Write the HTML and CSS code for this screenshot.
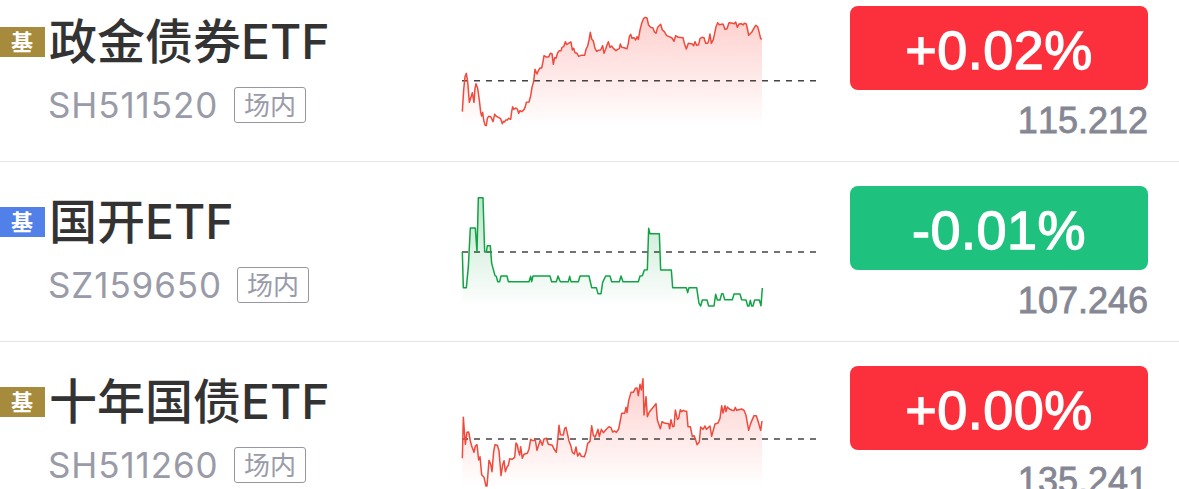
FILE: index.html
```html
<!DOCTYPE html>
<html lang="zh-CN">
<head>
  <meta charset="UTF-8" />
  <meta name="viewport" content="width=device-width, initial-scale=1" />
  <title>自选基金</title>
  <link rel="stylesheet" href="styles.css">
</head>
<body>

  <!-- Shared gradients -->
  <svg class="defs" width="0" height="0">
    <defs>
      <linearGradient id="fillRed" x1="0" y1="0" x2="0" y2="1">
        <stop offset="0" stop-color="#f9423a" stop-opacity="0.25" />
        <stop offset="1" stop-color="#f9423a" stop-opacity="0" />
      </linearGradient>
      <linearGradient id="fillGreen" x1="0" y1="0" x2="0" y2="1">
        <stop offset="0" stop-color="#16a34a" stop-opacity="0.28" />
        <stop offset="1" stop-color="#16a34a" stop-opacity="0" />
      </linearGradient>
    </defs>
  </svg>

  <div class="list">
    <div class="row">
      <span class="badge gold">基</span>
      <div class="info">
        <div class="name">政金债券ETF</div>
        <div class="meta">
          <span class="code">SH511520</span>
          <span class="tag">场内</span>
        </div>
      </div>
      <svg class="chart red" viewBox="0 0 1095 375">
        <path class="area" />
        <path class="base" d="M21,212 H1084" />
        <polyline class="line" points="22,305 26,240 30,200 34,190 38,215 43,277 48,262 52,248 57,277 60,235 63,221 68,235 73,270 77,307 80,318 83,307 86,330 90,345 94,347 97,325 101,319 107,320 111,328 114,335 119,313 123,318 130,322 137,326 142,341 146,334 149,336 152,330 157,330 161,325 167,328 170,305 173,290 176,298 183,294 187,297 191,310 195,302 200,305 207,299 211,290 214,277 222,276 227,258 231,232 236,214 240,178 246,192 250,182 255,174 260,174 264,155 267,137 274,141 281,141 286,130 291,131 295,163 299,143 303,145 308,128 313,122 318,122 321,112 326,110 331,95 335,104 342,99 348,96 352,120 356,115 360,128 366,130 371,139 378,136 389,136 393,118 398,108 402,90 406,67 410,87 415,93 420,115 425,124 430,121 437,120 443,107 447,130 452,118 456,105 460,95 465,112 470,108 475,115 483,122 488,118 493,116 496,102 500,112 507,113 516,116 520,100 523,80 527,73 531,85 537,83 542,90 546,80 550,88 555,60 560,40 566,25 571,22 576,24 581,46 587,52 594,54 598,65 603,70 608,52 617,43 622,60 628,65 635,77 643,80 651,84 657,94 662,77 670,82 684,83 688,100 694,117 700,100 712,102 716,107 720,95 725,106 731,104 735,86 741,82 747,83 752,100 758,100 761,92 765,72 769,100 775,88 779,70 783,50 788,38 793,44 804,42 810,58 816,56 822,38 830,39 838,41 842,36 847,52 852,42 859,41 864,45 868,40 874,42 878,60 881,76 890,67 896,56 902,46 908,50 912,65 917,86 921,87" />
      </svg>
      <div class="quote">
        <div class="change up">+0.02%</div>
        <div class="price">115.212</div>
      </div>
    </div>

    <div class="row">
      <span class="badge blue">基</span>
      <div class="info">
        <div class="name">国开ETF</div>
        <div class="meta">
          <span class="code wide">SZ159650</span>
          <span class="tag">场内</span>
        </div>
      </div>
      <svg class="chart green" viewBox="0 0 1095 375">
        <path class="area" />
        <path class="base" d="M21,186 H1084" />
        <polyline class="line" points="22,186 25,293 34,293 40,230 46,114 61,114 66,186 70,23 84,23 89,186 94,186 97,167 106,167 110,220 120,257 124,259 128,275 134,275 138,258 156,258 160,275 222,275 227,259 230,275 234,258 285,258 290,275 304,275 309,258 316,275 340,275 344,259 348,275 370,275 375,258 402,258 410,293 424,293 429,311 438,311 443,277 452,258 465,258 470,275 493,275 498,258 504,275 550,275 555,258 562,257 568,240 577,239 581,115 585,131 613,131 617,240 649,240 653,293 694,293 698,308 702,293 725,293 732,340 737,348 742,330 756,330 761,348 777,348 782,313 787,330 795,330 800,311 804,311 809,329 832,329 837,312 855,312 860,329 873,330 878,348 882,348 886,331 890,348 894,348 899,330 913,330 918,347 922,294" />
      </svg>
      <div class="quote">
        <div class="change down">-0.01%</div>
        <div class="price">107.246</div>
      </div>
    </div>

    <div class="row">
      <span class="badge gold">基</span>
      <div class="info">
        <div class="name">十年国债ETF</div>
        <div class="meta">
          <span class="code">SH511260</span>
          <span class="tag">场内</span>
        </div>
      </div>
      <svg class="chart red" viewBox="0 0 1095 375">
        <path class="area" />
        <path class="base" d="M21,207 H1084" />
        <polyline class="line" points="22,265 25,142 31,223 36,187 41,186 46,213 51,231 57,247 61,228 66,224 71,270 75,260 80,314 87,322 93,348 96,348 102,271 107,282 111,305 116,245 120,224 127,226 132,242 138,317 143,284 147,272 151,305 156,291 160,286 164,266 171,268 179,262 183,219 187,225 190,242 194,255 197,230 202,265 207,253 217,250 222,237 227,208 233,212 241,210 246,241 252,222 256,210 262,226 267,207 274,205 280,223 292,226 297,237 304,247 308,210 312,166 316,194 325,195 329,175 333,172 337,190 342,213 348,229 352,247 358,252 363,231 368,258 374,249 379,259 388,260 393,245 398,220 405,214 410,167 415,196 420,202 425,190 429,178 433,200 439,178 445,188 454,178 462,170 468,173 473,186 479,183 484,187 491,177 500,130 509,130 513,112 516,128 521,92 528,67 535,67 541,55 546,54 550,77 555,43 559,60 564,26 567,135 573,80 577,140 583,126 603,101 607,150 616,176 621,155 628,159 641,161 644,176 648,149 653,170 657,169 661,120 667,148 671,145 676,119 680,125 685,121 691,124 695,124 699,170 706,170 712,200 717,197 721,206 726,224 733,215 737,171 744,178 750,168 754,178 765,168 770,199 780,162 789,159 795,145 800,107 804,129 810,107 813,125 817,111 823,117 830,120 837,122 841,112 845,121 860,117 867,121 873,136 881,181 887,160 897,137 904,137 909,153 917,181 921,153" />
      </svg>
      <div class="quote">
        <div class="change up">+0.00%</div>
        <div class="price">135.241</div>
      </div>
    </div>
  </div>

  <script>
    // Fill the area under each line
    const bottom = 350;

    document.querySelectorAll(".chart").forEach((chart) => {
      const points = chart.querySelector(".line").getAttribute("points").split(" ");
      const left = points[0].split(",")[0];
      const right = points[points.length - 1].split(",")[0];

      chart.querySelector(".area").setAttribute(
        "d",
        "M" + left + "," + bottom + " L" + points.join(" ") + " L" + right + "," + bottom + " Z"
      );
    });
  </script>

</body>
</html>
```
FILE: styles.css
```css
* {
  margin: 0;
  padding: 0;
  box-sizing: border-box;
}

html, body {
  height: 100%;
  overflow: hidden;
}

body {
  background: #fff;
  font-family: Inter, "Noto Sans CJK SC", sans-serif;
}

.defs {
  display: block;
}

/* The list is scrolled a little, the first row is cut at the top */
.list {
  margin-top: -18px;
}

.row {
  display: flex;
  align-items: flex-start;
  height: 180px;
  border-bottom: 1px solid #e4e4e6;
}

.badge {
  width: 45px;
  height: 30px;
  margin-top: 45px;
  padding-right: 1px;
  color: #fff;
  font-size: 22px;
  font-weight: 700;
  line-height: 30px;
  text-align: center;
}

.gold {
  background: #a68b3c;
}

.blue {
  background: #5080e8;
}

.info {
  width: 407px;
  margin-left: 3px;
  padding-top: 30px;
}

.name {
  height: 60px;
  padding-left: 1px;
  color: #333;
  font-size: 48px;
  font-weight: 500;
  line-height: 60px;
  white-space: nowrap;
}

.meta {
  display: flex;
  align-items: center;
  gap: 15px;
  margin-top: 15px;
}

.code {
  width: 171px;
  color: #9a9ba8;
  font-size: 35px;
  line-height: 36px;
  letter-spacing: 0.9px;
  white-space: nowrap;
}

.code.wide {
  width: 174px;
}

.tag {
  width: 72px;
  height: 36px;
  border: 1px solid #9697a3;
  border-radius: 3px;
  color: #9a9ba8;
  font-size: 26px;
  font-weight: 400;
  line-height: 35px;
  text-align: center;
}

/* Sparkline */
.chart {
  flex: none;
  width: 365px;
  height: 125px;
  margin-top: 28px;
}

.line {
  fill: none;
  stroke-width: 4.5;
  stroke-linejoin: round;
}

.base {
  fill: none;
  stroke: #444;
  stroke-width: 4.5;
  stroke-dasharray: 18 18;
}

.red .line {
  stroke: #f04a3c;
}

.red .area {
  fill: url(#fillRed);
}

.green .line {
  stroke: #12a344;
}

.green .area {
  fill: url(#fillGreen);
}

.quote {
  width: 298px;
  margin: 24px 0 0 30px;
  font-family: "Liberation Sans", Arial, sans-serif;
  font-kerning: none;
}

.change {
  height: 84px;
  border-radius: 8px;
  color: #fff;
  font-size: 54px;
  line-height: 88px;
  letter-spacing: 0.5px;
  text-align: center;
  -webkit-text-stroke: 1.3px #fff;
}

.up {
  background: #fb303c;
}

.down {
  background: #1ec17e;
}

.price {
  margin-top: 11px;
  color: #858894;
  font-size: 36px;
  line-height: 40px;
  text-align: right;
  -webkit-text-stroke: 0.8px #858894;
}
```
